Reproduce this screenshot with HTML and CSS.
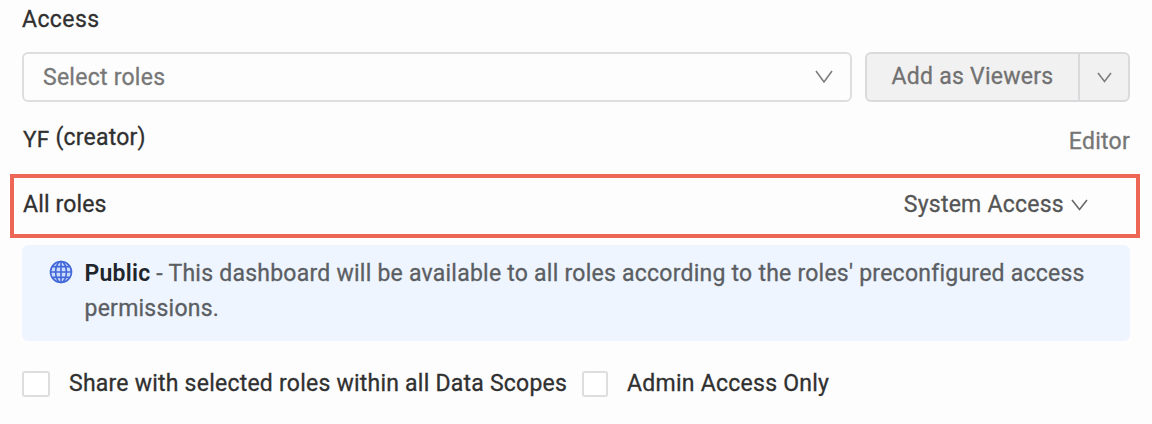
FILE: index.html
```html
<!DOCTYPE html>
<html lang="en">
<head>
<meta charset="utf-8">
<title>Dashboard access</title>
<link rel="stylesheet" href="styles.css">
</head>
<body>
<main class="panel">
  <h1 class="panel-title">Access</h1>
  <div class="controls">
    <div class="select">
      <span class="select-placeholder">Select roles</span>
      <svg class="chevron chevron-lg" viewBox="0 0 18 14"><path d="M1 1 L9 12 L17 1"/></svg>
    </div>
    <div class="split-button">
      <button class="split-main">Add as Viewers</button>
      <button class="split-toggle" aria-label="More options"><svg class="chevron chevron-sm" viewBox="0 0 15 11"><path d="M1 1 L7.5 9.5 L14 1"/></svg></button>
    </div>
  </div>
  <div class="creator-row">
    <div class="creator"><span class="creator-name">YF</span><span class="creator-tag">(creator)</span></div>
    <span class="creator-role">Editor</span>
  </div>
  <div class="roles-row">
    <span class="roles-name">All roles</span>
    <div class="role-select"><span>System Access</span><svg class="chevron chevron-md" viewBox="0 0 17 12"><path d="M1 1 L8.5 10.5 L16 1"/></svg></div>
  </div>
  <div class="notice">
    <svg class="globe" viewBox="0 0 24 24"><circle cx="12" cy="12" r="10.5"/><ellipse cx="12" cy="12" rx="5.4" ry="10.5"/><path d="M12 1.5V22.5M1.5 12H22.5M3.2 6.6H20.8M3.2 17.4H20.8"/></svg>
    <p class="notice-text"><span class="notice-line"><strong>Public</strong> - This dashboard will be available to all roles according to the roles' preconfigured access</span> <span class="notice-line">permissions.</span></p>
  </div>
  <div class="options">
    <label class="option option-share"><span class="box box-wide"></span><span>Share with selected roles within all Data Scopes</span></label>
    <label class="option option-admin"><span class="box"></span><span>Admin Access Only</span></label>
  </div>
</main>
</body>
</html>
```

FILE: styles.css
```css
* { box-sizing: border-box; }
body {
  margin: 0;
  background: #fdfdfd;
  color: #303030;
  font: 400 23px/36px Roboto, "Liberation Sans", sans-serif;
  letter-spacing: 0.25px;
  -webkit-text-stroke: 0.3px currentColor;
}
.panel { width: 1152px; height: 424px; padding: 0 22px; overflow: hidden; white-space: nowrap; }
.panel-title { margin: 0; height: 52px; padding-top: 2px; font: inherit; letter-spacing: 0.4px; }
.controls { display: flex; gap: 13px; height: 50px; }
.select {
  display: flex; align-items: center; justify-content: space-between;
  width: 830px; padding: 0 17px 0 19px;
  border: 2px solid #dedede; border-radius: 6px;
  color: #777;
}
.select-placeholder { padding-top: 1px; letter-spacing: 0.25px; }
.split-button { display: flex; flex: 1; border: 2px solid #dadadc; border-radius: 6px; background: #f1f1f1; }
.split-main, .split-toggle {
  display: flex; align-items: center; justify-content: center;
  padding: 0; border: 0; background: none;
  font: inherit; letter-spacing: inherit; color: #717171;
}
.split-main { width: 211px; padding-bottom: 1px; }
.split-toggle { flex: 1; border-left: 2px solid #dadadc; }
.chevron { fill: none; stroke: #7c7c7c; stroke-width: 1.6; flex: none; }
.chevron-lg { width: 18px; height: 14px; }
.chevron-md { width: 17px; height: 12px; stroke: #686868; }
.chevron-sm { width: 15px; height: 11px; }
.creator-row { display: flex; justify-content: space-between; align-items: center; height: 72px; }
.creator { display: flex; gap: 6px; padding-top: 2px; }
.creator-name { font-size: 22.5px; padding-left: 1px; }
.creator-tag { margin-top: -1px; letter-spacing: 0.2px; }
.creator-role { color: #757575; padding-top: 7px; }
.roles-row {
  display: flex; justify-content: space-between; align-items: center;
  height: 64px; margin: 0 -10px 0 -12px; padding: 0 48px 2px 9px;
  border: 4px solid #ee6656;
}
.roles-name { letter-spacing: 0.15px; }
.role-select { display: flex; align-items: center; gap: 7px; color: #555; }
.notice {
  display: flex; align-items: flex-start; gap: 12px;
  height: 96px; margin-top: 7px; padding: 11px 27px;
  border-radius: 6px; background: #eef5fe; color: #5b5e63;
}
.globe { width: 24px; height: 24px; margin-top: 4px; fill: #cbdcfb; stroke: #4267d8; stroke-width: 1.6; flex: none; }
.notice-text { margin: 0 0 0 -0.5px; line-height: 35px; letter-spacing: 0.24px; }
.notice-line { display: block; }
.notice strong { font-weight: 600; color: #20242b; -webkit-text-stroke: 0; }
.options { display: flex; gap: 15px; height: 26px; margin-top: 30px; }
.option { display: flex; align-items: center; gap: 19px; }
.option-share { letter-spacing: 0.23px; }
.box { width: 26px; height: 26px; border: 2px solid #dedede; border-radius: 3px; background: #fff; flex: none; }
.box-wide { width: 28px; }
```
